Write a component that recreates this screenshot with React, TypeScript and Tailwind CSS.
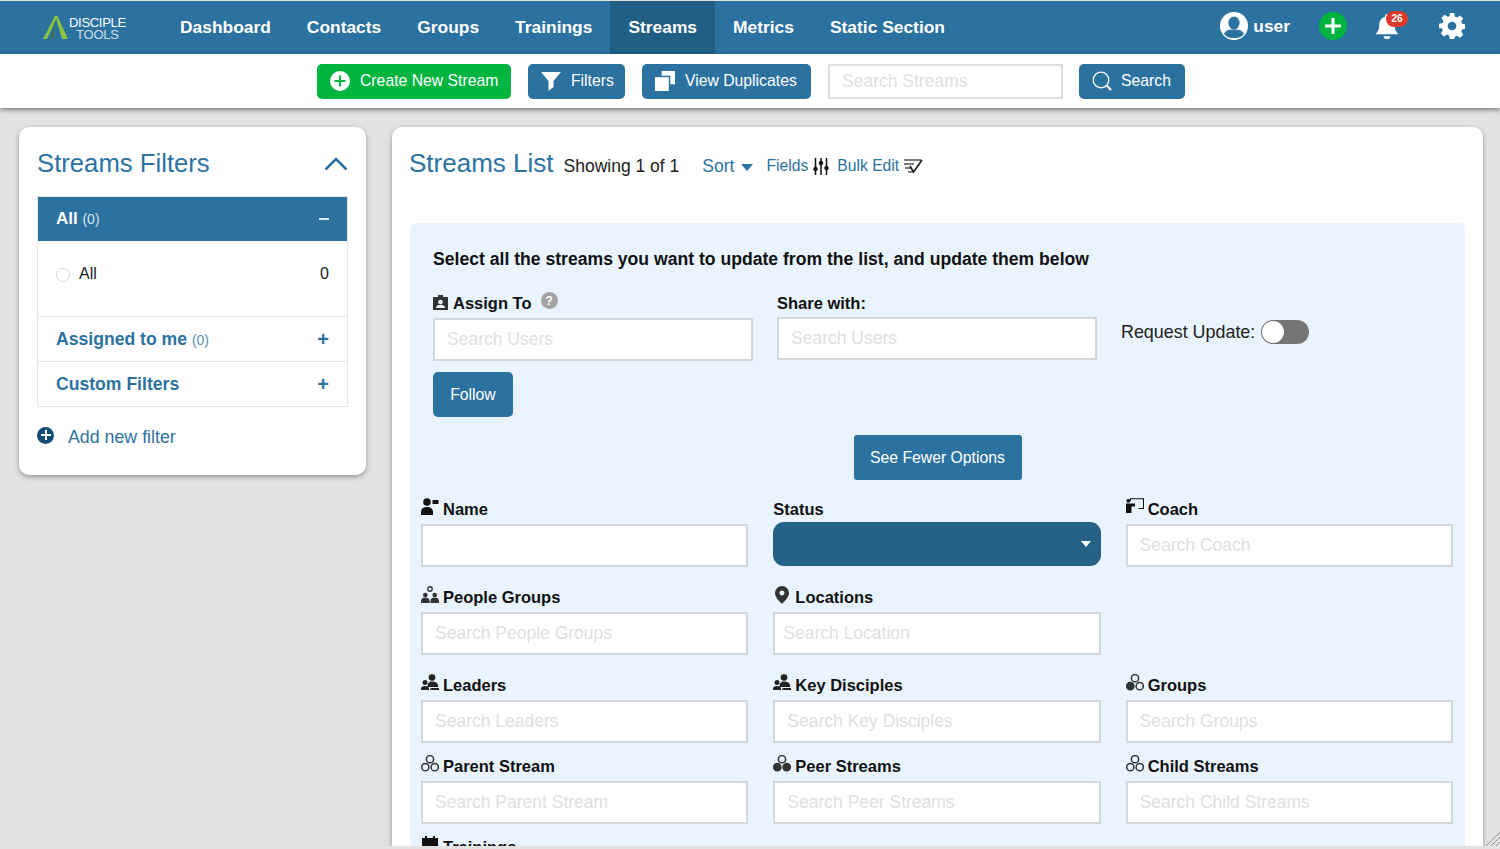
import React from 'react'

type IconProps = { className?: string }

function Logo(): React.JSX.Element {
  return (
    <div className="flex items-center">
      <svg viewBox="0 0 26 26" className="h-[26px] w-[26px]">
        <path d="M12 1 L14.5 1 L4 24 L0 24 Z" fill="#8cc63f" />
        <path d="M12.5 1 L14.5 1 L25 24 L19 24 Z" fill="#8cc63f" />
        <path d="M13 5 L10 24 L8 24 Z" fill="#4f6b26" />
      </svg>
      <div className="mt-[2px] flex flex-col items-center text-white">
        <span className="text-[13px] leading-[13px] tracking-[-0.3px]">DISCIPLE</span>
        <span className="text-[13px] leading-[12px] tracking-[-0.2px] text-[#c9dbe7]">TOOLS</span>
      </div>
    </div>
  )
}

function CirclePlus({ className, color }: IconProps & { color: string }): React.JSX.Element {
  return (
    <svg viewBox="0 0 20 20" className={className}>
      <circle cx="10" cy="10" r="10" fill="#fff" />
      <path d="M10 4.5v11M4.5 10h11" stroke={color} strokeWidth="2" />
    </svg>
  )
}

function UserCircle({ className }: IconProps): React.JSX.Element {
  return (
    <svg viewBox="0 0 28 28" className={className}>
      <circle cx="14" cy="14" r="14" fill="#fff" />
      <ellipse cx="14" cy="11" rx="5.6" ry="6.4" fill="#2c72a0" />
      <path d="M4 22 C6 17.5 10 17.5 14 17.5 C18 17.5 22 17.5 24 22 C21 26 17 26 14 26 C11 26 7 26 4 22 Z" fill="#2c72a0" />
    </svg>
  )
}

function Bell({ className }: IconProps): React.JSX.Element {
  return (
    <svg viewBox="0 0 24 28" className={className} fill="#fff">
      <path d="M12 1a2 2 0 0 1 2 2v1c4 1 6 4.500 6 8.500 0 5 1.500 7 4 9.500H0c2.500-2.500 4-4.500 4-9.500C4 8.500 6 5 10 4V3a2 2 0 0 1 2-2z" />
      <path d="M8.500 24h7a3.500 3 0 0 1-7 0z" />
    </svg>
  )
}

function Gear({ className }: IconProps): React.JSX.Element {
  return (
    <svg viewBox="0 0 24 24" className={className} fill="#fff">
      <path
        fillRule="evenodd"
        d="M10 0h4l.7 3.300 1.900.8 2.900-1.800 2.800 2.800-1.800 2.900.8 1.900 3.300.7v4l-3.300.7-.8 1.900 1.800 2.900-2.800 2.800-2.900-1.800-1.900.8L14 24h-4l-.7-3.300-1.900-.8-2.900 1.800-2.800-2.800 1.800-2.900-.8-1.900L0 14v-4l3.300-.7.8-1.900-1.800-2.900 2.800-2.800 2.900 1.800 1.900-.8zM12 8a4 4 0 1 0 0 8 4 4 0 0 0 0-8z"
      />
    </svg>
  )
}

function Funnel({ className }: IconProps): React.JSX.Element {
  return (
    <svg viewBox="0 0 20 20" className={className} fill="#fff">
      <path d="M0 1h20l-7.500 9v6l-5 4V10z" />
    </svg>
  )
}

function Copies({ className }: IconProps): React.JSX.Element {
  return (
    <svg viewBox="0 0 21 21" className={className}>
      <path d="M7 0h14v14h-5V5H7z" fill="#fff" />
      <path d="M0 6.500h14.500V21H0z" fill="#fff" />
    </svg>
  )
}

function SearchIcon({ className }: IconProps): React.JSX.Element {
  return (
    <svg viewBox="0 0 20 20" className={className} fill="none" stroke="#fff">
      <circle cx="9" cy="9" r="7.800" strokeWidth="1.300" />
      <path d="M14.800 14.800L19 19" strokeWidth="2.200" />
    </svg>
  )
}

function Sliders({ className }: IconProps): React.JSX.Element {
  return (
    <svg viewBox="0 0 16 17" className={className} stroke="#111" fill="#111">
      <path d="M2.500 0v17M8 0v17M13.500 0v17" strokeWidth="1.500" />
      <circle cx="2.500" cy="11" r="2" strokeWidth="0.500" />
      <circle cx="8" cy="5" r="2" strokeWidth="0.500" />
      <circle cx="13.500" cy="10" r="2" strokeWidth="0.500" />
    </svg>
  )
}

function BulkEdit({ className }: IconProps): React.JSX.Element {
  return (
    <svg viewBox="0 0 19 16" className={className} fill="none" stroke="#333">
      <path d="M0 2h17M0 6h10M1 10h6M4 14h6" strokeWidth="1.500" stroke="#555" />
      <path d="M6 8l3.500 6L18 2" strokeWidth="1.700" stroke="#222" />
    </svg>
  )
}

function Grip({ className }: IconProps): React.JSX.Element {
  return (
    <svg viewBox="0 0 14 14" className={className} stroke="#999" fill="none">
      <path d="M0 14L14 0M5 14L14 5M10 14l4-4" strokeWidth="1" />
    </svg>
  )
}

/* ---- field label icons ---- */

function PersonCard({ className }: IconProps): React.JSX.Element {
  return (
    <svg viewBox="0 0 18 17" className={className} fill="#111">
      <circle cx="6" cy="4" r="3.800" />
      <path d="M0 17v-3c0-3 2-5 6-5s6 2 6 5v3z" />
      <rect x="11.500" y="2" width="6" height="4" />
    </svg>
  )
}

function Badge({ className }: IconProps): React.JSX.Element {
  return (
    <svg viewBox="0 0 15 16" className={className}>
      <path d="M0 3h5V1h5v2h5v13H0z" fill="#333" />
      <circle cx="7.500" cy="8" r="2.300" fill="#eaf4fe" />
      <path d="M3 14c0-2.500 2-3.300 4.500-3.300S12 11.500 12 14z" fill="#eaf4fe" />
    </svg>
  )
}

function Coach({ className }: IconProps): React.JSX.Element {
  return (
    <svg viewBox="0 0 18 16" className={className}>
      <circle cx="2.300" cy="2.800" r="1.900" fill="#111" />
      <path d="M0 5.500h9v3H5.500V15H0z" fill="#111" />
      <path d="M4.500 3V.7h13v9.800h-5" fill="none" stroke="#111" strokeWidth="1.100" />
    </svg>
  )
}

function PeopleGroups({ className }: IconProps): React.JSX.Element {
  return (
    <svg viewBox="0 0 18 17" className={className}>
      <circle cx="9" cy="3" r="2.200" fill="none" stroke="#333" strokeWidth="1.400" />
      <circle cx="4.300" cy="9" r="2.300" fill="#333" />
      <circle cx="13.700" cy="9" r="2.300" fill="#333" />
      <path d="M0 17v-2c0-2 1.500-3.500 4.300-3.500S8.600 13 8.600 15v2zM9.400 17v-2c0-2 1.500-3.500 4.300-3.500S18 13 18 15v2z" fill="#333" />
    </svg>
  )
}

function Pin({ className }: IconProps): React.JSX.Element {
  return (
    <svg viewBox="0 0 14 18" className={className}>
      <path
        fillRule="evenodd"
        d="M7 0a7 7 0 0 1 7 7c0 4-4 8-7 11-3-3-7-7-7-11a7 7 0 0 1 7-7zm0 4.500a2.500 2.500 0 1 0 0 5 2.500 2.500 0 0 0 0-5z"
        fill="#333"
      />
    </svg>
  )
}

function Leaders({ className }: IconProps): React.JSX.Element {
  return (
    <svg viewBox="0 0 18 16" className={className} fill="#222">
      <circle cx="11" cy="3.500" r="3.300" />
      <path d="M6.500 13c0-4 1.500-5.500 4.500-5.500s6 1.500 6 4v1.500z" />
      <circle cx="4" cy="8.500" r="2.500" />
      <path d="M0 16v-1.500c0-1.500 1.500-2.500 4-2.500s4 1 4 2.500V16zM9.500 16v-2H18v2z" />
    </svg>
  )
}

function Trio({ className, filled }: IconProps & { filled: [boolean, boolean, boolean] }): React.JSX.Element {
  const circles = [
    { cx: 9, cy: 4.200 },
    { cx: 4.300, cy: 12.200 },
    { cx: 13.700, cy: 12.200 },
  ]
  return (
    <svg viewBox="0 0 18 17" className={className}>
      {circles.map((c, i) => (
        <circle
          key={i}
          cx={c.cx}
          cy={c.cy}
          r="3.600"
          fill={filled[i] ? '#333' : 'none'}
          stroke="#333"
          strokeWidth="1.500"
        />
      ))}
    </svg>
  )
}

function Calendar({ className }: IconProps): React.JSX.Element {
  return (
    <svg viewBox="0 0 16 16" className={className} fill="#111">
      <path d="M3 0h2v2h6V0h2v2h3v14H0V2h3z" />
    </svg>
  )
}

function Field({
  label,
  icon,
  placeholder,
  inputClass = 'px-[12px]',
}: {
  label: string
  icon: React.ReactNode
  placeholder?: string
  inputClass?: string
}): React.JSX.Element {
  return (
    <div className="flex flex-col">
      <div className="flex h-[26px] items-center text-[16.500px] font-bold text-[#111]">
        <span className="mr-[4px] flex h-[26px] w-[18px] items-start justify-center">{icon}</span>
        <span className="pb-[4px]">{label}</span>
      </div>
      <input
        placeholder={placeholder}
        className={`h-[43px] w-full border-2 border-[#d3d8dc] bg-white text-[17.500px] placeholder:text-[#e0e0e0] ${inputClass}`}
      />
    </div>
  )
}

const navItems = ['Dashboard', 'Contacts', 'Groups', 'Trainings', 'Streams', 'Metrics', 'Static Section']

export default function App(): React.JSX.Element {
  return (
    <div
      className="relative flex h-[849px] w-[1500px] flex-col overflow-hidden bg-[#e2e2e2]"
      style={{ fontFamily: '"Liberation Sans", Arial, sans-serif' }}
    >
      {/* top nav */}
      <nav className="mt-px flex h-[53px] shrink-0 items-stretch bg-[#2c72a0] text-white">
        <div className="flex w-[162px] shrink-0 items-center pl-[43px]">
          <Logo />
        </div>
        {navItems.map((item) => (
          <a
            key={item}
            className={`flex items-center px-[18px] text-[17.400px] font-bold ${item === 'Streams' ? 'bg-[#215f85]' : ''}`}
          >
            {item}
          </a>
        ))}
        <div className="ml-auto flex items-center pr-[35px] pb-[3px]">
          <UserCircle className="h-[28px] w-[28px]" />
          <span className="ml-[5px] text-[17.400px] font-bold">user</span>
          <span className="ml-[29px] flex h-[28px] w-[28px] items-center justify-center rounded-full bg-[#00b440]">
            <svg viewBox="0 0 16 16" className="h-[16px] w-[16px]">
              <path d="M8 0v16M0 8h16" stroke="#fff" strokeWidth="3" />
            </svg>
          </span>
          <span className="relative ml-[28px]">
            <Bell className="h-[27px] w-[24px]" />
            <span className="absolute top-[-2px] left-[11px] flex h-[16px] w-[22px] items-center justify-center rounded-full bg-[#dc3a2b] text-[10px] font-bold">
              26
            </span>
          </span>
          <Gear className="ml-[40px] h-[26px] w-[26px]" />
        </div>
      </nav>

      {/* toolbar */}
      <div className="relative flex h-[54px] shrink-0 items-center justify-center gap-[17px] bg-white pl-[2px] shadow-[0_2px_5px_rgba(0,0,0,0.45)]">
        <button className="flex h-[35px] w-[194px] items-center rounded-[5px] bg-[#00b440] pl-[13px] text-[15.750px] text-white">
          <CirclePlus className="mr-[10px] h-[20px] w-[20px]" color="#00b440" />
          Create New Stream
        </button>
        <button className="flex h-[35px] w-[97px] items-center rounded-[5px] bg-[#2c72a0] pl-[13px] text-[15.750px] text-white">
          <Funnel className="mr-[10px] h-[20px] w-[20px]" />
          Filters
        </button>
        <button className="flex h-[35px] w-[169px] items-center rounded-[5px] bg-[#2c72a0] pl-[13px] text-[15.750px] text-white">
          <Copies className="mr-[10px] h-[20px] w-[20px]" />
          View Duplicates
        </button>
        <input
          placeholder="Search Streams"
          className="h-[35px] w-[235px] border-2 border-[#dcdfe2] bg-white px-[12px] text-[17.500px] placeholder:text-[#e0e0e0]"
        />
        <button className="-ml-px flex h-[35px] w-[106px] items-center rounded-[5px] bg-[#2c72a0] pl-[13px] text-[15.750px] text-white">
          <SearchIcon className="mr-[9px] h-[20px] w-[20px]" />
          Search
        </button>
      </div>

      {/* content */}
      <div className="mb-[3px] flex min-h-0 flex-1 items-start gap-[26px] overflow-hidden pt-[19px] pl-[19px]">
        {/* filters card */}
        <aside className="h-[348px] w-[347px] shrink-0 rounded-[10px] bg-white px-[18px] shadow-[0_2px_5px_rgba(0,0,0,0.35)]">
          <div className="flex h-[69px] items-center justify-between">
            <h2 className="pt-[4px] text-[25.700px] leading-none text-[#2c72a0]">Streams Filters</h2>
            <svg viewBox="0 0 24 14" className="mt-[4px] h-[14px] w-[24px]" fill="none">
              <path d="M1.500 12.500L12 2l10.500 10.500" stroke="#2c72a0" strokeWidth="2.500" />
            </svg>
          </div>
          <div className="border border-[#e6e6e6]">
            <div className="flex h-[44px] items-center justify-between bg-[#2c72a0] px-[18px] text-white">
              <span className="text-[17px] font-bold">
                All <span className="text-[14px] font-normal text-[#d8e6ef]">(0)</span>
              </span>
              <span className="h-[2px] w-[10px] bg-[#dfe9f0]" />
            </div>
            <div className="flex h-[75px] items-start justify-between px-[18px] pt-[21px] text-[16px] text-[#222]">
              <span className="flex items-center">
                <span className="mt-[2px] mr-[9px] h-[14px] w-[14px] rounded-full border border-[#d5d5d5]" />
                All
              </span>
              <span>0</span>
            </div>
            <div className="flex h-[45px] items-center justify-between border-t border-[#e6e6e6] px-[18px] text-[#2c72a0]">
              <span className="text-[17.600px] font-bold">
                Assigned to me <span className="text-[14px] font-normal text-[#5b8db0]">(0)</span>
              </span>
              <span className="text-[20px] leading-none font-bold">+</span>
            </div>
            <div className="flex h-[45px] items-center justify-between border-t border-[#e6e6e6] px-[18px] text-[#2c72a0]">
              <span className="text-[17.600px] font-bold">Custom Filters</span>
              <span className="text-[20px] leading-none font-bold">+</span>
            </div>
          </div>
          <div className="mt-[17px] flex items-center text-[17.800px] text-[#2c72a0]">
            <span className="relative top-[-2px] mr-[14px] flex h-[17px] w-[17px] items-center justify-center rounded-full bg-[#0f4d75]">
              <svg viewBox="0 0 10 10" className="h-[10px] w-[10px]">
                <path d="M5 0v10M0 5h10" stroke="#fff" strokeWidth="2" />
              </svg>
            </span>
            Add new filter
          </div>
        </aside>

        {/* list card */}
        <main className="flex h-[760px] w-[1091px] shrink-0 flex-col rounded-t-[10px] bg-white px-[18px] shadow-[0_2px_5px_rgba(0,0,0,0.35)]">
          <div className="-ml-px flex h-[96px] shrink-0 items-start pt-[20px]">
            <h1 className="text-[26px] leading-[32px] text-[#2c72a0]">Streams List</h1>
            <span className="mt-[8px] ml-[10px] text-[17.500px] leading-[22px] text-[#222]">Showing 1 of 1</span>
            <span className="mt-[8px] ml-[23px] flex items-center text-[17.500px] leading-[22px] text-[#2c72a0]">
              Sort
              <span className="mt-[2px] ml-[7px] h-0 w-0 border-x-[6.500px] border-t-[7px] border-x-transparent border-t-[#2c72a0]" />
            </span>
            <span className="mt-[8px] ml-[13px] flex items-center text-[15.700px] leading-[22px] text-[#2c72a0]">
              Fields
              <Sliders className="ml-[5px] h-[17px] w-[16px]" />
            </span>
            <span className="mt-[8px] ml-[8px] flex items-center text-[15.700px] leading-[22px] text-[#2c72a0]">
              Bulk Edit
              <BulkEdit className="ml-[5px] h-[16px] w-[19px]" />
            </span>
          </div>

          <section className="min-h-0 flex-1 overflow-hidden rounded-t-[6px] bg-[#e9f4fe]">
            <div className="px-[23px] pt-[25px]">
              <p className="text-[17.600px] leading-[22px] font-bold text-[#111]">
                Select all the streams you want to update from the list, and update them below
              </p>
              <div className="mt-[21px] grid grid-cols-[320px_320px_1fr] gap-x-[24px]">
                <div>
                  <div className="flex h-[24px] items-center text-[16.500px] font-bold text-[#111]">
                    <Badge className="mr-[5px] mb-[3px] h-[16px] w-[15px]" />
                    Assign To
                    <span className="mb-[5px] ml-[9px] flex h-[17px] w-[17px] items-center justify-center rounded-full bg-[#a3a3a3] text-[13px] text-white">
                      ?
                    </span>
                  </div>
                  <input
                    placeholder="Search Users"
                    className="mt-[3px] h-[43px] w-full border-2 border-[#d3d8dc] bg-white px-[12px] text-[17.500px] placeholder:text-[#e0e0e0]"
                  />
                </div>
                <div>
                  <div className="flex h-[24px] items-center text-[16.500px] font-bold text-[#111]">Share with:</div>
                  <input
                    placeholder="Search Users"
                    className="mt-[2px] h-[43px] w-full border-2 border-[#d3d8dc] bg-white px-[12px] text-[17.500px] placeholder:text-[#e0e0e0]"
                  />
                </div>
                <div className="flex items-start pt-[29px] text-[17.900px] leading-[24px] text-[#222]">
                  Request Update:
                  <span className="ml-[6px] flex h-[24px] w-[48px] items-center rounded-full bg-[#757575] pl-[1px]">
                    <span className="h-[22px] w-[22px] rounded-full bg-white" />
                  </span>
                </div>
              </div>
              <button className="mt-[11px] h-[45px] w-[80px] rounded-[5px] bg-[#2c72a0] text-[15.750px] text-white">
                Follow
              </button>
            </div>
            <div className="mt-[18px] flex justify-center">
              <button className="h-[45px] w-[168px] rounded-[3px] bg-[#2c72a0] text-[15.750px] text-white">
                See Fewer Options
              </button>
            </div>

            <div className="mt-[18px] flex flex-col pr-[12px] pl-[11px]">
              <div className="grid grid-cols-3 gap-x-[25px]">
                <Field label="Name" icon={<PersonCard className="h-[17px] w-[18px]" />} />
                <div className="flex flex-col">
                  <div className="flex h-[24px] items-center pb-[2px] text-[16.500px] font-bold text-[#111]">Status</div>
                  <div className="flex h-[44px] items-center justify-end rounded-[11px] bg-[#266286] pr-[10px]">
                    <span className="h-0 w-0 border-x-[5px] border-t-[6px] border-x-transparent border-t-white" />
                  </div>
                </div>
                <Field label="Coach" icon={<Coach className="h-[16px] w-[18px]" />} placeholder="Search Coach" />
              </div>
              <div className="mt-[19px] grid grid-cols-3 gap-x-[25px]">
                <Field
                  label="People Groups"
                  icon={<PeopleGroups className="h-[17px] w-[18px]" />}
                  placeholder="Search People Groups"
                />
                <Field
                  label="Locations"
                  icon={<Pin className="h-[18px] w-[14px]" />}
                  placeholder="Search Location"
                  inputClass="px-[8px]"
                />
              </div>
              <div className="mt-[19px] grid grid-cols-3 gap-x-[25px]">
                <Field label="Leaders" icon={<Leaders className="h-[16px] w-[18px]" />} placeholder="Search Leaders" />
                <Field
                  label="Key Disciples"
                  icon={<Leaders className="h-[16px] w-[18px]" />}
                  placeholder="Search Key Disciples"
                />
                <Field
                  label="Groups"
                  icon={<Trio className="h-[17px] w-[18px]" filled={[false, true, false]} />}
                  placeholder="Search Groups"
                />
              </div>
              <div className="mt-[12px] grid grid-cols-3 gap-x-[25px]">
                <Field
                  label="Parent Stream"
                  icon={<Trio className="h-[17px] w-[18px]" filled={[false, false, false]} />}
                  placeholder="Search Parent Stream"
                />
                <Field
                  label="Peer Streams"
                  icon={<Trio className="h-[17px] w-[18px]" filled={[false, true, true]} />}
                  placeholder="Search Peer Streams"
                />
                <Field
                  label="Child Streams"
                  icon={<Trio className="h-[17px] w-[18px]" filled={[false, false, false]} />}
                  placeholder="Search Child Streams"
                />
              </div>
              <div className="mt-[12px] grid grid-cols-3 gap-x-[25px]">
                <Field label="Trainings" icon={<Calendar className="h-[16px] w-[16px]" />} placeholder="Search Trainings" />
              </div>
            </div>
          </section>
        </main>
      </div>

      <Grip className="absolute right-0 bottom-[3px] h-[14px] w-[14px]" />
    </div>
  )
}
